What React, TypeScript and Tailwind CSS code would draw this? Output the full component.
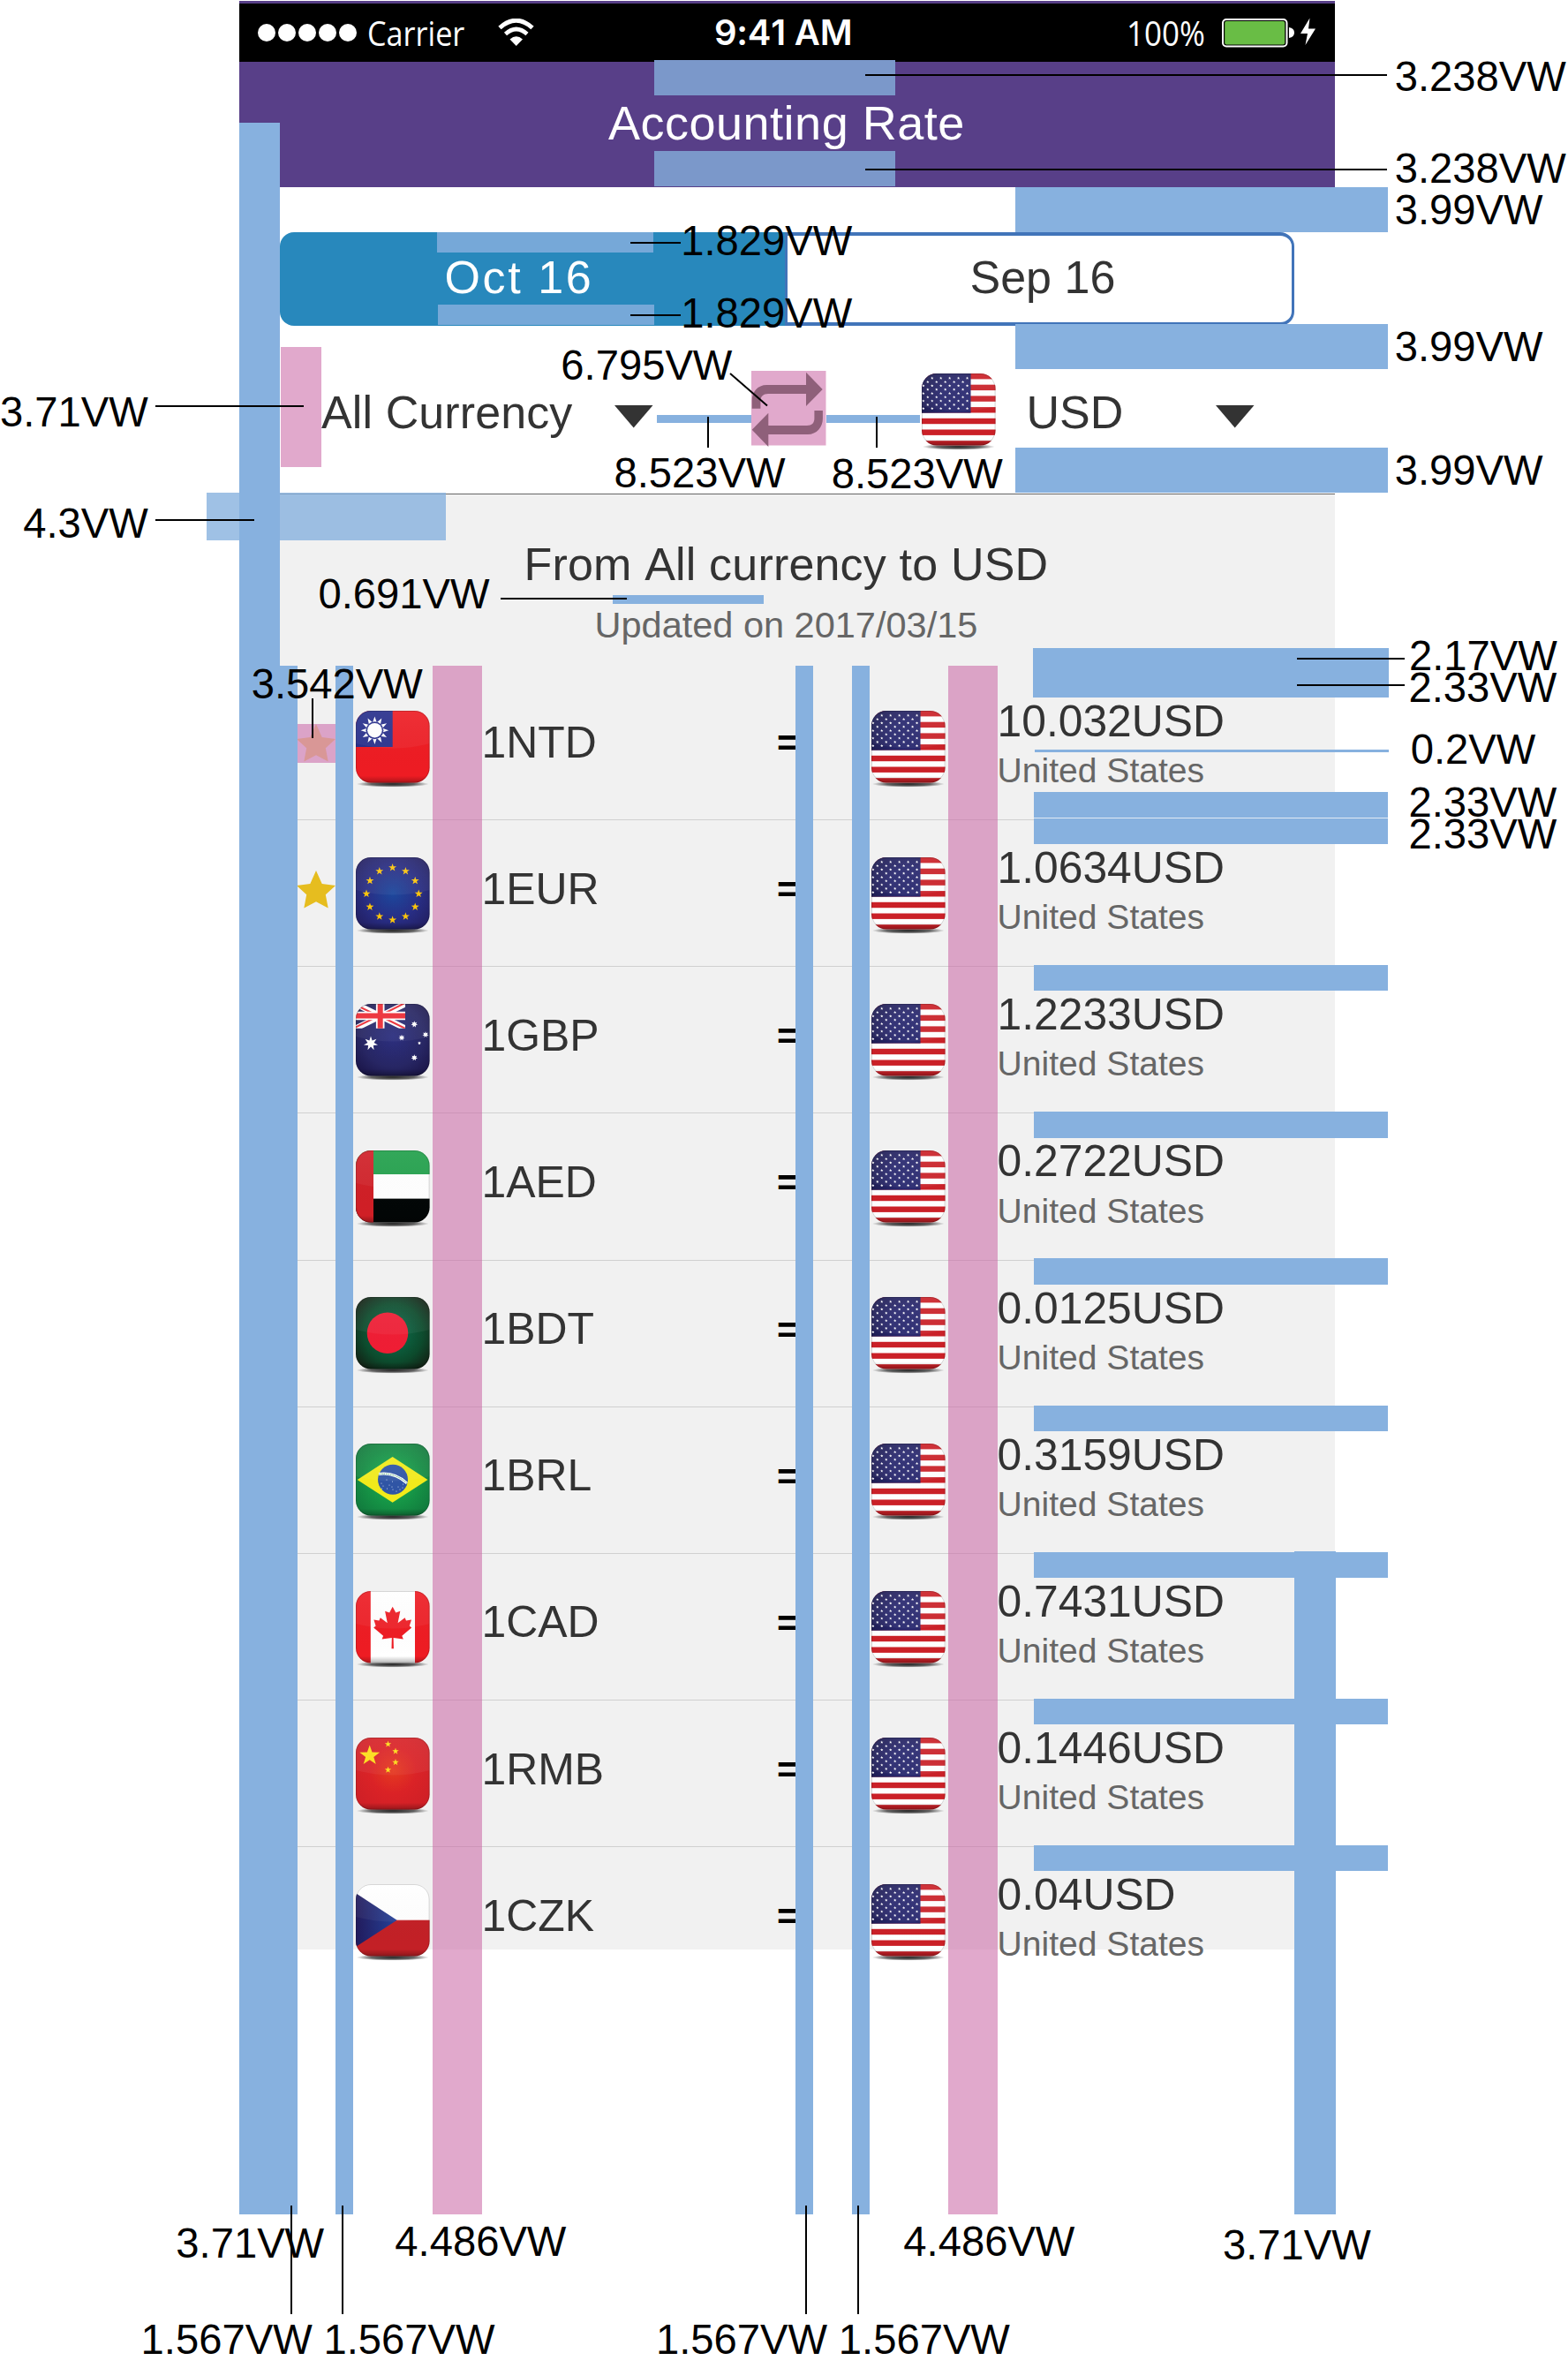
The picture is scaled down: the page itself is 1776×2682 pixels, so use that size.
import React from "react";

type Box = { x: number; y: number; w: number; h: number; c: string };
type Mark = { x: number; base: number; t: string };

function starPoints(cx: number, cy: number, outer: number, n = 5, ratio = 0.4) {
  const pts: string[] = [];
  for (let i = 0; i < n * 2; i++) {
    const r = i % 2 === 0 ? outer : outer * ratio;
    const a = -Math.PI / 2 + (i * Math.PI) / n;
    pts.push(`${(cx + r * Math.cos(a)).toFixed(2)},${(cy + r * Math.sin(a)).toFixed(2)}`);
  }
  return pts.join(" ");
}

function UsArt() {
  const stars: React.ReactNode[] = [];
  for (let r = 0; r < 9; r++) {
    const start = r % 2 === 0 ? 1.8 : 6.8;
    const count = r % 2 === 0 ? 6 : 5;
    for (let k = 0; k < count; k++) {
      stars.push(
        <polygon key={`${r}-${k}`} points={starPoints(start + k * 9.95, 5.3 + r * 4.3, 1.7, 5, 0.45)} fill="#fff" />
      );
    }
  }
  return (
    <>
      <rect width="84" height="82" fill="#fff" />
      {[0, 1, 2, 3, 4, 5, 6].map((i) => (
        <rect key={i} y={i * 12.7} width="84" height="6.4" fill="#cb2027" />
      ))}
      <rect width="55.5" height="44.6" fill="#28276f" />
      <rect width="55.5" height="44.6" fill="url(#usCorner)" />
      {stars}
    </>
  );
}

function TwArt() {
  return (
    <>
      <rect width="84" height="82" fill="#ee1c23" />
      <rect width="41.7" height="41" fill="#282f8c" />
      <polygon points={starPoints(21.4, 22.2, 15.8, 12, 0.58)} fill="#fff" />
      <circle cx="21.4" cy="22.2" r="10" fill="#282f8c" />
      <circle cx="21.4" cy="22.2" r="8.3" fill="#fff" />
    </>
  );
}

function EuArt() {
  return (
    <>
      <rect width="84" height="82" fill="url(#euBg)" />
      {Array.from({ length: 12 }, (_, i) => {
        const a = (i * Math.PI) / 6;
        return (
          <polygon
            key={i}
            points={starPoints(41.6 + 29.6 * Math.sin(a), 41.3 - 29.6 * Math.cos(a), 4.7)}
            fill="#fdc60b"
          />
        );
      })}
    </>
  );
}

function AuArt() {
  return (
    <>
      <rect width="84" height="82" fill="url(#auBg)" />
      <svg width="56" height="27.7" viewBox="0 0 56 27.7">
        <path d="M0 0L56 27.7M56 0L0 27.7" stroke="#fff" strokeWidth="6.5" />
        <path d="M0 1.2L27 14.5M29 14.5L56 27.9M56 -1.2L29 12.5M0 26.4L27 13" stroke="#ee2a33" strokeWidth="2" />
        <path d="M27.7 0V28M0 13.5H56" stroke="#fff" strokeWidth="9.6" />
        <path d="M27.7 0V28M0 13.5H56" stroke="#ee2a33" strokeWidth="6" />
      </svg>
      <polygon points={starPoints(17, 44.8, 8.2, 7, 0.45)} fill="#fff" />
      <polygon points={starPoints(66.3, 23, 3.8, 7, 0.5)} fill="#fff" />
      <polygon points={starPoints(79, 34.8, 3.6, 7, 0.5)} fill="#fff" />
      <polygon points={starPoints(52, 38.3, 3.6, 7, 0.5)} fill="#fff" />
      <polygon points={starPoints(72, 44.4, 2, 5, 0.5)} fill="#fff" />
      <polygon points={starPoints(66.3, 61, 3.7, 7, 0.5)} fill="#fff" />
    </>
  );
}

function AeArt() {
  return (
    <>
      <rect width="84" height="82" fill="#fff" />
      <rect width="84" height="27" fill="#20a04a" />
      <rect y="54.6" width="84" height="28" fill="#020606" />
      <rect width="20" height="82" fill="#d01f26" />
    </>
  );
}

function BdArt() {
  return (
    <>
      <rect width="84" height="82" fill="url(#bdBg)" />
      <circle cx="36" cy="40.8" r="23.3" fill="#f01d34" />
    </>
  );
}

function BrArt() {
  const dots = [
    [29, 45], [31, 48], [35, 41], [35.5, 51], [38, 47], [41, 49], [41.5, 43],
    [42, 52], [46, 54], [48, 49], [50, 52], [53, 50], [53.5, 46], [29.5, 51],
  ];
  return (
    <>
      <rect width="84" height="82" fill="url(#brBg)" />
      <path d="M1.7 41L41.6 15L81.5 41L41.6 66.8Z" fill="#f3ec1a" />
      <circle cx="42" cy="40.7" r="17" fill="#2f55a6" />
      <path d="M26 34.5Q44 32 58 45" fill="none" stroke="#fff" strokeWidth="3" />
      <path d="M26.5 34.6Q44 32.4 57.6 44.6" fill="none" stroke="#3fa66a" strokeWidth="1" strokeDasharray="1.5 1" />
      {dots.map(([x, y]) => (
        <circle key={`${x}-${y}`} cx={x} cy={y} r="0.6" fill="#cfdcf2" />
      ))}
    </>
  );
}

function CaArt() {
  return (
    <>
      <rect width="84" height="82" fill="#fff" />
      <rect width="16.8" height="82" fill="#ee1c23" />
      <rect x="67" width="17" height="82" fill="#ee1c23" />
      <path
        d="M41.7 17.7L45.3 24.6L50.3 22.8L47.6 36.2L55.6 30.2L57 33.6L63 32.5L60.8 39.6L63.2 41.6L52.3 50.8L53.8 54.4L42.6 53L42.9 65.2H40.5L40.8 53L29.6 54.4L31.1 50.8L20.2 41.6L22.6 39.6L20.4 32.5L26.4 33.6L27.8 30.2L35.8 36.2L33.1 22.8L38.1 24.6Z"
        fill="#ee1c23"
      />
    </>
  );
}

function CnArt() {
  return (
    <>
      <rect width="84" height="82" fill="url(#cnBg)" />
      <polygon points={starPoints(15.7, 20.4, 12)} fill="#fede17" />
      <polygon points={starPoints(36.5, 7.4, 3.9)} fill="#fede17" />
      <polygon points={starPoints(45, 15.5, 3.9)} fill="#fede17" />
      <polygon points={starPoints(45, 28, 3.9)} fill="#fede17" />
      <polygon points={starPoints(36.5, 36.6, 3.9)} fill="#fede17" />
    </>
  );
}

function CzArt() {
  return (
    <>
      <rect width="84" height="41" fill="#fff" />
      <rect y="40.7" width="84" height="42" fill="#c32026" />
      <path d="M0 10.3L46.6 40.8L0 71Z" fill="url(#czBlue)" />
    </>
  );
}

const ART: Record<string, () => React.ReactElement> = {
  us: UsArt, tw: TwArt, eu: EuArt, au: AuArt, ae: AeArt, bd: BdArt, br: BrArt, ca: CaArt, cn: CnArt, cz: CzArt,
};

/* Gradients and clip path shared by every flag. */
function FlagDefs() {
  return (
    <svg className="absolute" width="0" height="0" aria-hidden="true">
      <defs>
        <clipPath id="flagClip">
          <rect x="0" y="0" width="83.6" height="81.6" rx="17" />
        </clipPath>
        <radialGradient id="flagShadow">
          <stop offset="0" stopColor="#000" stopOpacity="0.85" />
          <stop offset="0.6" stopColor="#000" stopOpacity="0.6" />
          <stop offset="1" stopColor="#000" stopOpacity="0" />
        </radialGradient>
        <linearGradient id="flagEdge" x1="0" y1="0" x2="0" y2="1">
          <stop offset="0" stopColor="#fff" stopOpacity="0.04" />
          <stop offset="0.9" stopColor="#000" stopOpacity="0" />
          <stop offset="1" stopColor="#000" stopOpacity="0.3" />
        </linearGradient>
        <radialGradient id="usCorner" cx="0.75" cy="0.6" r="0.9">
          <stop offset="0.4" stopColor="#161440" stopOpacity="0" />
          <stop offset="1" stopColor="#161440" stopOpacity="0.75" />
        </radialGradient>
        <radialGradient id="euBg" cx="0.5" cy="0.5" r="0.7">
          <stop offset="0" stopColor="#1b479d" />
          <stop offset="0.5" stopColor="#282e86" />
          <stop offset="1" stopColor="#211b58" />
        </radialGradient>
        <radialGradient id="auBg" cx="0.5" cy="0.45" r="0.7">
          <stop offset="0" stopColor="#2b2e80" />
          <stop offset="0.6" stopColor="#272664" />
          <stop offset="1" stopColor="#191344" />
        </radialGradient>
        <radialGradient id="bdBg" cx="0.5" cy="0.5" r="0.68">
          <stop offset="0" stopColor="#0b7350" />
          <stop offset="0.6" stopColor="#0c4a2c" />
          <stop offset="1" stopColor="#15170f" />
        </radialGradient>
        <radialGradient id="brBg" cx="0.5" cy="0.5" r="0.7">
          <stop offset="0.3" stopColor="#17a04a" />
          <stop offset="1" stopColor="#10723a" />
        </radialGradient>
        <radialGradient id="cnBg" cx="0.5" cy="0.45" r="0.7">
          <stop offset="0" stopColor="#e7391f" />
          <stop offset="0.45" stopColor="#dc2226" />
          <stop offset="1" stopColor="#cc1f26" />
        </radialGradient>
        <linearGradient id="czBlue">
          <stop offset="0" stopColor="#211a5c" />
          <stop offset="1" stopColor="#24419a" />
        </linearGradient>
      </defs>
    </svg>
  );
}

function Flag({ code }: { code: string }) {
  const Art = ART[code];
  return (
    <svg className="block h-[88px] w-[84px]" viewBox="0 0 84 88">
      <ellipse cx="41.8" cy="83" rx="41" ry="3.6" fill="url(#flagShadow)" />
      <g clipPath="url(#flagClip)">
        <Art />
        <path d="M0 0H84V37Q42 48 0 37Z" fill="#fff" fillOpacity="0.05" />
        <rect width="84" height="82" fill="url(#flagEdge)" />
      </g>
      <rect x="0.5" y="0.5" width="82.6" height="80.6" rx="16.5" fill="none" stroke="#000" strokeOpacity="0.16" />
    </svg>
  );
}

function Caret() {
  return (
    <svg className="block h-[26px] w-11" viewBox="0 0 44 26">
      <path d="M0 0H43.5L21.7 25.5Z" fill="#333" />
    </svg>
  );
}

function Swap() {
  return (
    <svg className="block h-[86px] w-[85px]" viewBox="0 0 85 86">
      <rect width="84.5" height="84.5" fill="#e1a9cc" />
      <path
        fill="#8f607a"
        d="M.7 42.7V34C.7 24 7 16 17.5 16H62V1.7L80.7 21L62 40V26H19C13.5 26 10.4 29 10.4 34V42.7Z"
      />
      <path
        fill="#8f607a"
        d="M80.9 45V54C80.9 64 74 72 64 72H19.3V86L.7 66.7L19.3 47.7V62H63C68.5 62 71.4 59 71.4 54V45Z"
      />
    </svg>
  );
}

function StatusBar() {
  return (
    <div className="flex h-[66px] items-center bg-black text-white">
      <div className="ml-[21px] flex gap-[3.6px]">
        {[0, 1, 2, 3, 4].map((i) => (
          <span key={i} className="h-[19.5px] w-[19.5px] rounded-full bg-white" />
        ))}
      </div>
      <div className="ml-3 w-[148px] origin-left scale-x-[0.9] font-['Open_Sans'] text-[38px] leading-none">Carrier</div>
      <svg className="h-8 w-[42px]" viewBox="0 0 42 32">
        <path d="M2 10.5Q20.7 -6 39 10.5" fill="none" stroke="#fff" strokeWidth="5" />
        <path d="M8.5 17.5Q20.7 6.5 33 17.5" fill="none" stroke="#fff" strokeWidth="4.6" />
        <path d="M13.5 23.5Q20.7 17 28 23.5L20.7 31Z" fill="#fff" />
      </svg>
      <div className="ml-[203px] w-[467px] whitespace-nowrap font-['Inter'] text-[40px] font-semibold leading-none tracking-[-0.2px]">
        9:41 AM
      </div>
      <div className="w-[108px] origin-left scale-x-[0.92] font-['Open_Sans'] text-[38px] leading-none">100%</div>
      <svg className="h-[34px] w-[108px]" viewBox="0 0 108 34">
        <rect x="1" y="2" width="72.5" height="30.5" rx="4" fill="none" stroke="#fff" strokeWidth="2" />
        <rect x="3.2" y="4" width="68" height="26.5" rx="2" fill="#69bd45" />
        <path d="M76 11Q82 12 82 17Q82 22 76 23Z" fill="#fff" />
        <path d="M99.5 .5L89 18H97L94.5 31L106 12.5H98Z" fill="#fff" />
      </svg>
    </div>
  );
}

const ROWS = [
  { flag: "tw", code: "1NTD", value: "10.032USD", star: "#d99796" },
  { flag: "eu", code: "1EUR", value: "1.0634USD", star: "#e6bd1f" },
  { flag: "au", code: "1GBP", value: "1.2233USD" },
  { flag: "ae", code: "1AED", value: "0.2722USD" },
  { flag: "bd", code: "1BDT", value: "0.0125USD" },
  { flag: "br", code: "1BRL", value: "0.3159USD" },
  { flag: "ca", code: "1CAD", value: "0.7431USD" },
  { flag: "cn", code: "1RMB", value: "0.1446USD" },
  { flag: "cz", code: "1CZK", value: "0.04USD" },
];

function RateRow({ row, last, first }: { row: (typeof ROWS)[number]; last: boolean; first: boolean }) {
  return (
    <div
      className={`grid h-[166.14px] shrink-0 grid-cols-[67px_142.5px_334.5px_107px_142.5px_1fr] pl-[65px] ${
        last ? "" : "border-b border-[#d0d0d0]"
      }`}
    >
      <div className={`mt-[57px] h-11 w-11 ${first ? "bg-[#dba3c8]" : ""}`}>
        {row.star && (
          <svg className="block h-11 w-11" viewBox="0 0 44 44">
            <path d="M22 0L28.7 15L44 17L32.8 27.3L35.7 42.5L22 35.2L8.3 42.5L11.2 27.3L0 17L15.3 15Z" fill={row.star} />
          </svg>
        )}
      </div>
      <div className="mt-[41.8px]">
        <Flag code={row.flag} />
      </div>
      <div className="mt-[53.7px] text-[49.9px] leading-none text-[#333]">{row.code}</div>
      <div className="mt-[58px] text-[42px] font-bold leading-none text-black">=</div>
      <div className="mt-[41.8px]">
        <Flag code="us" />
      </div>
      <div className="pt-[30px]">
        <div className="text-[49.8px] leading-none text-[#333]">{row.value}</div>
        <div className="mt-[10.4px] text-[39.1px] leading-none text-[#666]">United States</div>
      </div>
    </div>
  );
}

const BLUE = "#87b1df";
const PINK = "rgba(202,104,166,0.57)";

const BOXES: Box[] = [
  { x: 740.5, y: 68, w: 273, h: 40.3, c: "#7b98ca" },
  { x: 740.5, y: 170.5, w: 273, h: 40.5, c: "#7b98ca" },
  { x: 495, y: 263, w: 245, h: 22.7, c: "#76a8d8" },
  { x: 496, y: 345.3, w: 245, h: 23, c: "#76a8d8" },
  { x: 234, y: 558, w: 271, h: 53.7, c: "rgba(135,177,223,0.8)" },
  { x: 271, y: 139, w: 46.3, h: 616, c: BLUE },
  { x: 271, y: 754, w: 65.7, h: 1753.5, c: BLUE },
  { x: 317.5, y: 392.7, w: 46, h: 136, c: PINK },
  { x: 380.3, y: 754, w: 19.7, h: 1753.5, c: BLUE },
  { x: 489.5, y: 754, w: 56, h: 1753.5, c: PINK },
  { x: 901.3, y: 754, w: 20, h: 1753.5, c: BLUE },
  { x: 965, y: 754, w: 19.5, h: 1753.5, c: BLUE },
  { x: 1074, y: 754, w: 56, h: 1753.5, c: PINK },
  { x: 1466, y: 1757, w: 46.5, h: 750.5, c: BLUE },
  { x: 1150.3, y: 211.5, w: 422, h: 51, c: BLUE },
  { x: 1150.3, y: 367, w: 422, h: 50.5, c: BLUE },
  { x: 1150.3, y: 506.5, w: 422, h: 51, c: BLUE },
  { x: 744, y: 470, w: 107, h: 9.3, c: BLUE },
  { x: 935.7, y: 470, w: 106.5, h: 9.3, c: BLUE },
  { x: 694, y: 674.3, w: 171, h: 9.3, c: BLUE },
  { x: 1169.5, y: 734, w: 403, h: 56, c: BLUE },
  { x: 1171.5, y: 848.5, w: 401, h: 3, c: BLUE },
  { x: 1171, y: 897, w: 401.4, h: 29, c: BLUE },
  ...Array.from({ length: 8 }, (_, i) => ({ x: 1171, y: 927 + i * 166.14, w: 401.4, h: 29.3, c: BLUE })),
  { x: 1171, y: 926, w: 401.4, h: 1, c: "#dfe9f4" },
];

const LINES: Box[] = [
  { x: 980, y: 84, w: 591, h: 2, c: "#000" },
  { x: 980, y: 191, w: 591, h: 2, c: "#000" },
  { x: 714, y: 274, w: 57, h: 2, c: "#000" },
  { x: 714, y: 356, w: 57, h: 2, c: "#000" },
  { x: 176, y: 459, w: 168, h: 2, c: "#000" },
  { x: 176, y: 588, w: 112, h: 2, c: "#000" },
  { x: 567, y: 677.4, w: 143, h: 2, c: "#000" },
  { x: 801.4, y: 472, w: 2, h: 35, c: "#000" },
  { x: 992, y: 472, w: 2, h: 35, c: "#000" },
  { x: 353.4, y: 791, w: 2, h: 45, c: "#000" },
  { x: 1469, y: 745, w: 122, h: 2, c: "#000" },
  { x: 1469, y: 775, w: 122, h: 2, c: "#000" },
  { x: 329, y: 2498, w: 2, h: 122.5, c: "#000" },
  { x: 387.4, y: 2498, w: 2, h: 122.5, c: "#000" },
  { x: 912.4, y: 2498, w: 2, h: 122.5, c: "#000" },
  { x: 971, y: 2498, w: 2, h: 122.5, c: "#000" },
];

const MARKS: Mark[] = [
  { x: 1579.7, base: 103, t: "3.238VW" },
  { x: 1579.7, base: 207, t: "3.238VW" },
  { x: 1579.7, base: 253.5, t: "3.99VW" },
  { x: 1579.7, base: 409.3, t: "3.99VW" },
  { x: 1579.7, base: 549.3, t: "3.99VW" },
  { x: 771.2, base: 289, t: "1.829VW" },
  { x: 771.2, base: 371, t: "1.829VW" },
  { x: 0, base: 482.7, t: "3.71VW" },
  { x: 26.2, base: 609, t: "4.3VW" },
  { x: 360.5, base: 689, t: "0.691VW" },
  { x: 635.3, base: 430, t: "6.795VW" },
  { x: 695.5, base: 551.7, t: "8.523VW" },
  { x: 941.7, base: 553, t: "8.523VW" },
  { x: 284.7, base: 790.7, t: "3.542VW" },
  { x: 1596, base: 758.5, t: "2.17VW" },
  { x: 1595.5, base: 795.3, t: "2.33VW" },
  { x: 1597.7, base: 865, t: "0.2VW" },
  { x: 1595.5, base: 925, t: "2.33VW" },
  { x: 1595.5, base: 960.5, t: "2.33VW" },
  { x: 199.3, base: 2556.7, t: "3.71VW" },
  { x: 447.3, base: 2554.7, t: "4.486VW" },
  { x: 1023.3, base: 2554.7, t: "4.486VW" },
  { x: 1385, base: 2558.7, t: "3.71VW" },
  { x: 159.6, base: 2666, t: "1.567VW" },
  { x: 366.5, base: 2666, t: "1.567VW" },
  { x: 743, base: 2666, t: "1.567VW" },
  { x: 949.8, base: 2666, t: "1.567VW" },
];

function Measurements() {
  return (
    <div className="pointer-events-none absolute inset-0">
      {[...BOXES, ...LINES].map((b, i) => (
        <div key={i} className="absolute" style={{ left: b.x, top: b.y, width: b.w, height: b.h, background: b.c }} />
      ))}
      <svg className="absolute left-[826px] top-[422px] h-10 w-11" viewBox="0 0 44 40">
        <path d="M1 1L43 37.5" stroke="#000" strokeWidth="2" />
      </svg>
      {MARKS.map((m, i) => (
        <span
          key={i}
          className="absolute whitespace-nowrap text-[47.2px] leading-none text-black"
          style={{ left: m.x, top: m.base - 40 }}
        >
          {m.t}
        </span>
      ))}
    </div>
  );
}

export default function App() {
  return (
    <main className="relative h-[2682px] w-[1776px] overflow-hidden bg-white font-['Liberation_Sans',Arial,sans-serif] [font-kerning:none]">
      <FlagDefs />
      <div className="ml-[271px] flex w-[1241px] flex-col pt-px">
        <header className="h-[211px] bg-[#583f88] pt-[3px]">
          <StatusBar />
          <h1 className="pl-[418px] pt-[42px] text-[54px] leading-none tracking-[0.5px] text-white">Accounting Rate</h1>
        </header>

        <nav className="mx-[46px] mt-[51px] flex h-[106px]">
          <div className="w-[572px] rounded-l-2xl bg-[#2888bc] pl-[186.5px] pt-[24.7px] text-[52px] leading-none tracking-[2.6px] text-white">
            Oct 16
          </div>
          <div className="flex-1 rounded-r-2xl border-x-[3px] border-y-4 border-[#4174b9] bg-white pl-[206.5px] pt-[20.7px] text-[52px] leading-none text-[#333]">
            Sep 16
          </div>
        </nav>

        <section className="grid h-[190px] grid-cols-[331.5px_155.5px_193px_118.5px_214.5px_1fr] pl-[93px] text-[52px] leading-none text-[#333]">
          <div className="pt-[72.3px] tracking-[0.1px]">All Currency</div>
          <div className="pt-[90px]">
            <Caret />
          </div>
          <div className="pt-[51px]">
            <Swap />
          </div>
          <div className="pt-[54px]">
            <Flag code="us" />
          </div>
          <div className="pt-[72.3px]">USD</div>
          <div className="pt-[90px]">
            <Caret />
          </div>
        </section>

        <section className="flex h-[1649px] flex-col border-t border-[#666] bg-[#f1f1f1]">
          <div className="h-[203px] shrink-0 whitespace-nowrap">
            <h2 className="pl-[322.5px] pt-[53.3px] text-[52px] leading-none tracking-[0.18px] text-[#333]">
              From All currency to USD
            </h2>
            <p className="pl-[402.5px] pt-[21.3px] text-[41.5px] leading-none text-[#666]">Updated on 2017/03/15</p>
          </div>
          {ROWS.map((row, i) => (
            <RateRow key={row.code} row={row} first={i === 0} last={i === ROWS.length - 1} />
          ))}
        </section>
      </div>
      <Measurements />
    </main>
  );
}
